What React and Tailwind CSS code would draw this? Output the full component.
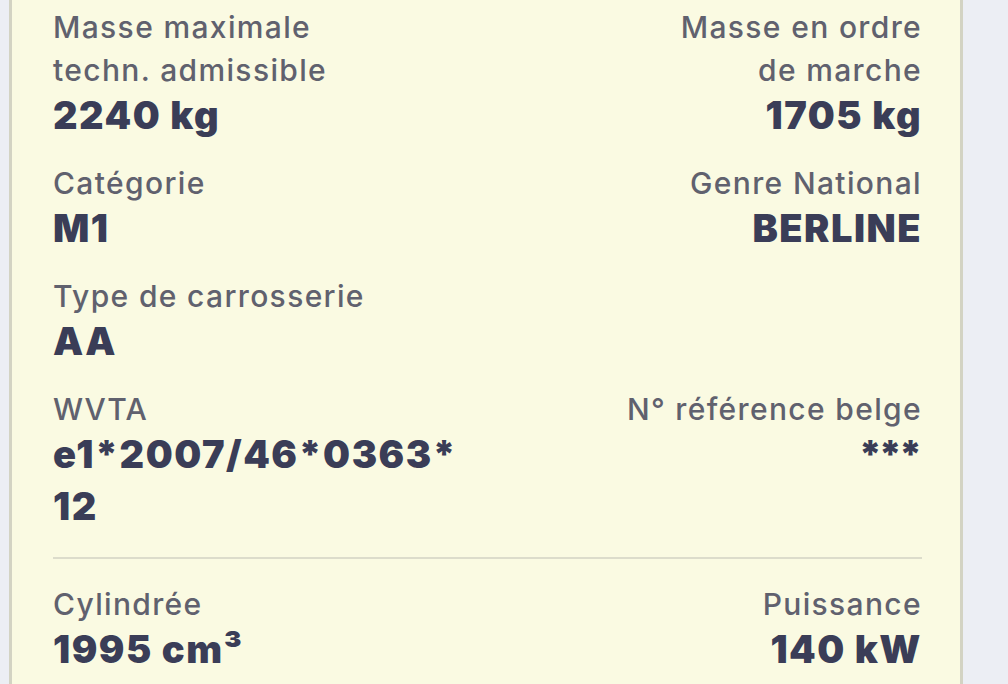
import React from "react";

function Label({ children, right }) {
  return (
    <div className={`text-[30px] leading-[43px] font-medium tracking-[1.35px] text-[#60616e] ${right ? "text-right" : ""}`}>
      {children}
    </div>
  );
}

function Value({ children, right }) {
  return (
    <div className={`text-[38px] leading-[46px] font-black tracking-[1.5px] text-[#3a3d57] ${right ? "text-right" : ""}`}>
      {children}
    </div>
  );
}

export default function App() {
  return (
    <div
      className="w-[1008px] h-[684px] overflow-hidden bg-[#eceef4]"
      style={{ fontFamily: "Inter, 'Noto Sans', sans-serif" }}
    >
      <div className="ml-[9px] w-[954px] h-full bg-[#fafae2] border-x-[3px] border-[#d3d3c3] pl-[41px] pr-[38px] pt-[6px]">
        <div className="grid grid-cols-2 gap-y-6">
          <div>
            <Label>
              Masse maximale
              <br />
              techn. admissible
            </Label>
            <Value>2240 kg</Value>
          </div>
          <div>
            <Label right>
              Masse en ordre
              <br />
              de marche
            </Label>
            <Value right>1705 kg</Value>
          </div>

          <div>
            <Label>Catégorie</Label>
            <Value>M1</Value>
          </div>
          <div>
            <Label right>Genre National</Label>
            <Value right>BERLINE</Value>
          </div>

          <div>
            <Label>Type de carrosserie</Label>
            <Value>AA</Value>
          </div>
          <div />

          <div>
            <Label>WVTA</Label>
            <Value>e1*2007/46*0363*</Value>
            <div className="mt-[6px]">
              <Value>12</Value>
            </div>
          </div>
          <div>
            <Label right>N° référence belge</Label>
            <div className="text-right text-[38px] leading-[46px] font-black tracking-[-3px] text-[#3a3d57] pr-[3px]">***</div>
          </div>
        </div>

        <div className="mt-7 border-t-2 border-[#dcdccb]" />

        <div className="grid grid-cols-2 mt-6">
          <div>
            <Label>Cylindrée</Label>
            <Value>1995 cm³</Value>
          </div>
          <div>
            <Label right>Puissance</Label>
            <Value right>140 kW</Value>
          </div>
        </div>
      </div>
    </div>
  );
}
